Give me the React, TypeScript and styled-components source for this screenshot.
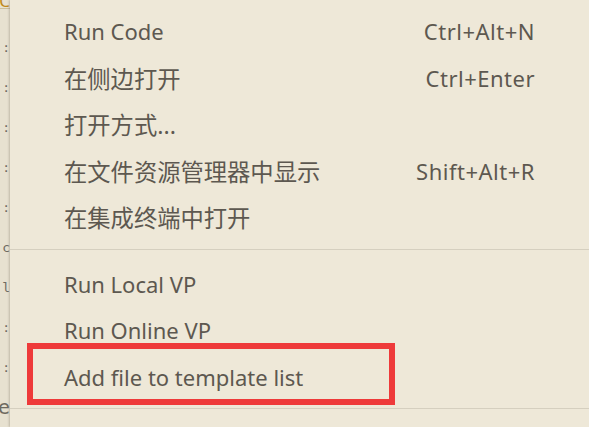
import React from "react";
import styled, { createGlobalStyle } from "styled-components";

const Global = createGlobalStyle`
  html, body { margin: 0; padding: 0; }
  body { background: #eee8d8; overflow: hidden; }
`;

const Page = styled.div`
  display: flex;
  width: 589px;
  height: 427px;
  overflow: hidden;
  font-family: "Noto Sans", "Noto Sans CJK SC", sans-serif;
`;

const EditorStrip = styled.div`
  width: 10px;
  flex: none;
  background: #e7e1d0;
  display: flex;
  flex-direction: column;
  overflow: hidden;
`;

const TabStub = styled.div`
  height: 13px;
  border-bottom: 1px solid #cbbf9c;
  display: flex;
  justify-content: flex-end;
  align-items: flex-end;
  color: #c08a1a;
  font-size: 17px;
  line-height: 14px;
  overflow: hidden;
`;

const CodeLines = styled.div`
  display: flex;
  flex-direction: column;
  padding-top: 18px;
`;

const CodeLine = styled.div<{ $big?: boolean }>`
  height: 40px;
  display: flex;
  justify-content: flex-end;
  align-items: center;
  white-space: nowrap;
  font-family: "DejaVu Sans Mono", monospace;
  font-size: ${(p) => (p.$big ? "20px" : "13px")};
  color: #6e6a60;
  overflow: hidden;
`;

const Menu = styled.div`
  position: relative;
  flex: 1;
  background: #eee8d8;
  box-shadow: -1px 0 2px rgba(120, 110, 90, 0.35);
  padding-top: 8px;
  display: flex;
  flex-direction: column;
`;

const Item = styled.div`
  height: 46.5px;
  display: flex;
  align-items: center;
  justify-content: space-between;
  padding: 0 54px 0 54px;
  color: #5d5850;
  font-size: 22px;
  white-space: nowrap;
`;

const Label = styled.span<{ $cjk?: boolean }>`
  font-size: ${(p) => (p.$cjk ? "23.3px" : "22px")};
`;

const Shortcut = styled.span`
  font-size: 22px;
  letter-spacing: 0.5px;
`;

const Separator = styled.div`
  height: 1px;
  background: #d5cfbf;
  margin: 8px 0 11px;
  flex: none;
`;

const Highlight = styled.div`
  position: absolute;
  left: 17px;
  top: 343px;
  width: 356px;
  height: 50px;
  border: 6px solid #ee3a3a;
  pointer-events: none;
`;

const top = [
  { label: "Run Code", key: "Ctrl+Alt+N" },
  { label: "在侧边打开", key: "Ctrl+Enter", cjk: true },
  { label: "打开方式...", cjk: true },
  { label: "在文件资源管理器中显示", key: "Shift+Alt+R", cjk: true },
  { label: "在集成终端中打开", cjk: true },
];

const bottom = [
  { label: "Run Local VP" },
  { label: "Run Online VP" },
  { label: "Add file to template list" },
];

const lines = ["7.:", "7.:", "7.:", "7.:", "7.:", "7.c", "7.l", "7.:", "7.:"];

export default function App() {
  return (
    <>
      <Global />
      <Page>
        <EditorStrip>
          <TabStub>C</TabStub>
          <CodeLines>
            {lines.map((l, i) => (
              <CodeLine key={i}>{l}</CodeLine>
            ))}
            <CodeLine $big>e</CodeLine>
          </CodeLines>
        </EditorStrip>
        <Menu>
          {top.map((it) => (
            <Item key={it.label}>
              <Label $cjk={it.cjk}>{it.label}</Label>
              {it.key && <Shortcut>{it.key}</Shortcut>}
            </Item>
          ))}
          <Separator />
          {bottom.map((it) => (
            <Item key={it.label}>
              <Label>{it.label}</Label>
            </Item>
          ))}
          <Separator />
          <Highlight />
        </Menu>
      </Page>
    </>
  );
}
